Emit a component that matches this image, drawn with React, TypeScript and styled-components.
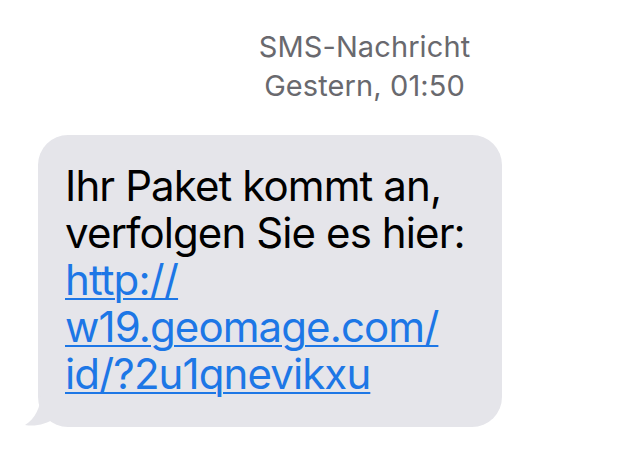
import styled, { createGlobalStyle } from 'styled-components';

const GlobalStyle = createGlobalStyle`
  html, body {
    margin: 0;
    padding: 0;
    background: #ffffff;
  }
  body {
    font-family: Inter, "Noto Sans", "Liberation Sans", sans-serif;
  }
`;

const Screen = styled.div`
  width: 631px;
  height: 451px;
  display: flex;
  flex-direction: column;
  overflow: hidden;
  background: #ffffff;
`;

const Header = styled.div`
  display: flex;
  flex-direction: column;
  align-items: center;
  padding: 27px 0 0 98px;
  color: #69696e;
  font-size: 29px;
  line-height: 39px;
  letter-spacing: 0.1px;
`;

const Row = styled.div`
  display: flex;
  padding: 30px 0 0 38px;
`;

const Bubble = styled.div`
  position: relative;
  width: 464px;
  box-sizing: border-box;
  padding: 27px 20px 30px 27px;
  background: #e5e5ea;
  border-radius: 30px;
  color: #000000;
  font-size: 42px;
  line-height: 47px;
  letter-spacing: -0.9px;
`;

const Tail = styled.svg`
  position: absolute;
  left: -13px;
  bottom: 0;
  width: 40px;
  height: 34px;
`;

const Link = styled.a`
  display: block;
  color: #1d77e6;
  text-decoration: underline;
  text-decoration-thickness: 2px;
  text-underline-offset: 3px;
`;

export default function App() {
  return (
    <Screen>
      <GlobalStyle />
      <Header>
        <span>SMS-Nachricht</span>
        <span>Gestern, 01:50</span>
      </Header>
      <Row>
        <Bubble>
          <Tail viewBox="0 0 40 34">
            <path
              d="M40 0 L16 0 C16 14 10 26 0 32 C10 34 22 31 30 25 C33 28 38 30 40 30 Z"
              fill="#e5e5ea"
            />
          </Tail>
          <div>Ihr Paket kommt an,</div>
          <div>verfolgen Sie es hier:</div>
          <Link href="#">http://</Link>
          <Link href="#">w19.geomage.com/</Link>
          <Link href="#">id/?2u1qnevikxu</Link>
        </Bubble>
      </Row>
    </Screen>
  );
}
